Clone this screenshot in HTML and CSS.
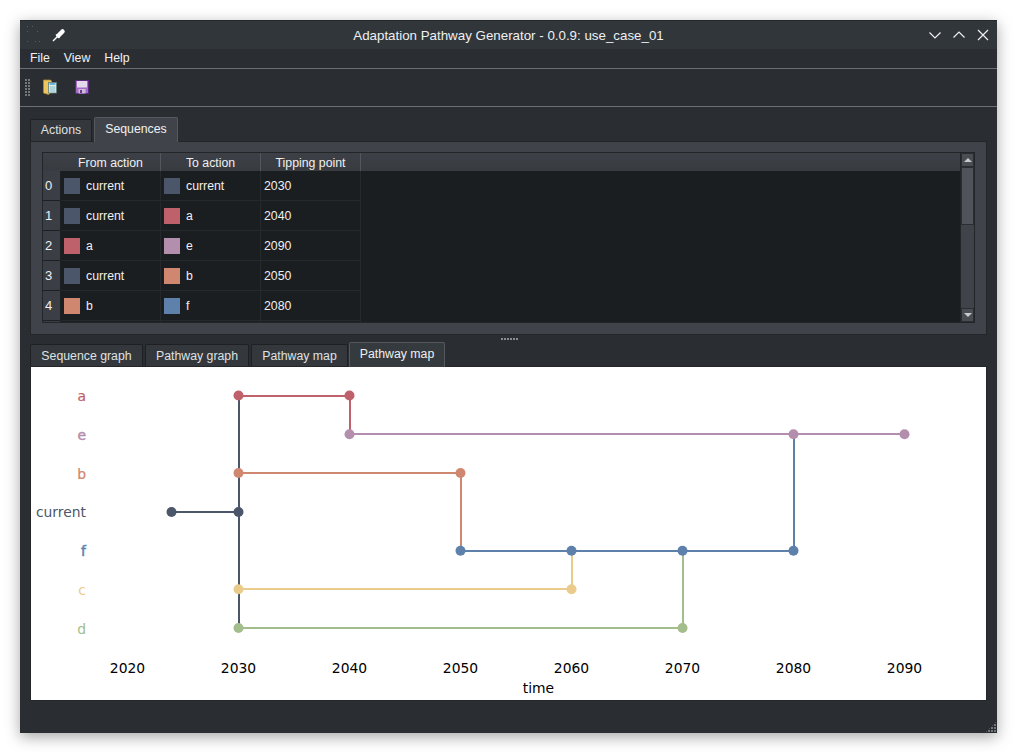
FILE: index.html
```html
<!DOCTYPE html>
<html lang="en">
<head>
    <meta charset="UTF-8">
    <title>Adaptation Pathway Generator</title>
    <link rel="stylesheet" href="styles.css">
</head>
<body>
    <div class="window">
        <div class="titlebar">
            <div class="title-left">
                <svg class="app-icon" width="20" height="20" viewBox="0 0 20 20">
                    <g fill="#5a5e62">
                        <rect x="1" y="1" width="1" height="1"/><rect x="6" y="1" width="1" height="1"/>
                        <rect x="1" y="6" width="1" height="1"/><rect x="11" y="6" width="1" height="1"/>
                        <rect x="1" y="16" width="1" height="1"/><rect x="9" y="16" width="1" height="1"/><rect x="13" y="16" width="1" height="1"/>
                    </g>
                </svg>
                <svg class="pin-icon" width="14" height="14" viewBox="0 0 14 14">
                    <path d="M1 13L6 8" fill="none" stroke="#fcfcfc" stroke-width="1.500"/>
                    <path d="M4 6.500L7.500 10" fill="none" stroke="#fcfcfc" stroke-width="1.500"/>
                    <path d="M6.500 7.500L10.500 3.500" fill="none" stroke="#fcfcfc" stroke-width="4.500" stroke-linecap="round"/>
                </svg>
            </div>
            <div class="title-text">Adaptation Pathway Generator - 0.0.9: use_case_01</div>
            <div class="title-buttons">
                <svg width="14" height="14" viewBox="0 0 14 14"><path d="M1.500 4.500L7 10l5.500-5.500" fill="none" stroke="#eff0f1" stroke-width="1.200"/></svg>
                <svg width="14" height="14" viewBox="0 0 14 14"><path d="M1.500 9.500L7 4l5.500 5.500" fill="none" stroke="#eff0f1" stroke-width="1.200"/></svg>
                <svg width="14" height="14" viewBox="0 0 14 14"><path d="M2 2l10 10M12 2L2 12" fill="none" stroke="#eff0f1" stroke-width="1.200"/></svg>
            </div>
        </div>

        <div class="menubar">
            <span class="menu-item">File</span>
            <span class="menu-item">View</span>
            <span class="menu-item">Help</span>
        </div>

        <div class="toolbar">
            <div class="grip"></div>
            <svg class="tool-icon" width="14" height="16" viewBox="0 0 14 16">
                <path d="M.5 1h7l1 1v11l-3 2.500-5-1.500z" fill="#eec65f" stroke="#b08a30" stroke-width=".8"/>
                <rect x="5.500" y="3.500" width="8" height="10.500" fill="#e4efec" stroke="#5d7f7c" stroke-width=".8"/>
                <path d="M6.500 5h6" stroke="#4fa8d8" stroke-width="1.600"/>
                <path d="M6.500 8h6M6.500 10h6M6.500 12h6" stroke="#7fb8c8" stroke-width="1"/>
            </svg>
            <svg class="tool-icon save-icon" width="14" height="16" viewBox="0 0 14 16">
                <rect x=".5" y="1.500" width="13" height="13" fill="#a46cc4" stroke="#5b2a80"/>
                <rect x="2" y="2" width="10" height="6.500" fill="#e4d8ec"/>
                <rect x="3.500" y="10" width="7" height="4.500" fill="#cdbbd8"/>
                <rect x="5" y="11" width="2" height="3" fill="#6b3a90"/>
            </svg>
        </div>

        <div class="content">
            <div class="tabs tabs-top">
                <div class="tab">Actions</div>
                <div class="tab tab-active">Sequences</div>
            </div>
            <div class="pane">
                <div class="table-frame">
                    <div class="table-main">
                        <div class="table-head">
                            <div class="corner"></div>
                            <div class="head-cell">From action</div>
                            <div class="head-cell">To action</div>
                            <div class="head-cell">Tipping point</div>
                        </div>
                        <div class="table-rows">
                            <div class="row">
                                <div class="row-num">0</div>
                                <div class="cell"><span class="swatch c-current"></span>current</div>
                                <div class="cell"><span class="swatch c-current"></span>current</div>
                                <div class="cell cell-num">2030</div>
                            </div>
                            <div class="row">
                                <div class="row-num">1</div>
                                <div class="cell"><span class="swatch c-current"></span>current</div>
                                <div class="cell"><span class="swatch c-a"></span>a</div>
                                <div class="cell cell-num">2040</div>
                            </div>
                            <div class="row">
                                <div class="row-num">2</div>
                                <div class="cell"><span class="swatch c-a"></span>a</div>
                                <div class="cell"><span class="swatch c-e"></span>e</div>
                                <div class="cell cell-num">2090</div>
                            </div>
                            <div class="row">
                                <div class="row-num">3</div>
                                <div class="cell"><span class="swatch c-current"></span>current</div>
                                <div class="cell"><span class="swatch c-b"></span>b</div>
                                <div class="cell cell-num">2050</div>
                            </div>
                            <div class="row">
                                <div class="row-num">4</div>
                                <div class="cell"><span class="swatch c-b"></span>b</div>
                                <div class="cell"><span class="swatch c-f"></span>f</div>
                                <div class="cell cell-num">2080</div>
                            </div>
                            <div class="row">
                                <div class="row-num"></div>
                                <div class="cell"></div>
                                <div class="cell"></div>
                                <div class="cell"></div>
                            </div>
                        </div>
                    </div>
                    <div class="scrollbar">
                        <div class="scroll-btn"><span class="arrow-up"></span></div>
                        <div class="scroll-thumb"></div>
                        <div class="scroll-track"></div>
                        <div class="scroll-btn"><span class="arrow-down"></span></div>
                    </div>
                </div>
            </div>

            <div class="splitter"><div class="splitter-dots"></div></div>

            <div class="tabs tabs-bottom">
                <div class="tab tab-seq">Sequence graph</div>
                <div class="tab tab-graph">Pathway graph</div>
                <div class="tab tab-map">Pathway map</div>
                <div class="tab tab-active tab-map-active">Pathway map</div>
            </div>
            <div class="plot-frame">
                <svg class="plot" width="955" height="333" viewBox="31 367 955 333">
                    <g fill="none" stroke-width="2">
                        <path d="M172 512H239M239 396V628" stroke="#4c566a"/>
                        <path d="M239 396H350V434" stroke="#bf616a"/>
                        <path d="M350 434H905" stroke="#b48ead"/>
                        <path d="M239 473H461V551" stroke="#d08770"/>
                        <path d="M239 589H572V551" stroke="#ebcb8b"/>
                        <path d="M239 628H683V551" stroke="#a3be8c"/>
                        <path d="M461 551H794V434" stroke="#5e81ac"/>
                    </g>
                    <g fill="#4c566a"><circle cx="171.500" cy="512" r="5"/><circle cx="238.500" cy="512" r="5"/></g>
                    <g fill="#bf616a"><circle cx="238.500" cy="395.500" r="5"/><circle cx="349.500" cy="395.500" r="5"/></g>
                    <g fill="#b48ead"><circle cx="349.500" cy="434.300" r="5"/><circle cx="793.500" cy="434.300" r="5"/><circle cx="904.500" cy="434.300" r="5"/></g>
                    <g fill="#d08770"><circle cx="238.500" cy="473" r="5"/><circle cx="460.500" cy="473" r="5"/></g>
                    <g fill="#ebcb8b"><circle cx="238.500" cy="589.200" r="5"/><circle cx="571.500" cy="589.200" r="5"/></g>
                    <g fill="#a3be8c"><circle cx="238.500" cy="628" r="5"/><circle cx="682.500" cy="628" r="5"/></g>
                    <g fill="#5e81ac"><circle cx="460.500" cy="550.700" r="5"/><circle cx="571.500" cy="550.700" r="5"/><circle cx="682.500" cy="550.700" r="5"/><circle cx="793.500" cy="550.700" r="5"/></g>

                    <g class="y-labels" text-anchor="end">
                        <text x="86" y="401" fill="#bf616a" stroke="#bf616a" stroke-width=".2">a</text>
                        <text x="86" y="440" fill="#b48ead" stroke="#b48ead" stroke-width=".5">e</text>
                        <text x="86" y="479" fill="#d08770" stroke="#d08770" stroke-width=".2">b</text>
                        <text x="86" y="517" fill="#4c566a">current</text>
                        <text x="86" y="556" fill="#5e81ac" stroke="#5e81ac" stroke-width=".5">f</text>
                        <text x="86" y="595" fill="#ebcb8b">c</text>
                        <text x="86" y="634" fill="#a3be8c">d</text>
                    </g>
                    <g class="x-labels" text-anchor="middle">
                        <text x="127.500" y="673">2020</text>
                        <text x="238.500" y="673">2030</text>
                        <text x="349.500" y="673">2040</text>
                        <text x="460.500" y="673">2050</text>
                        <text x="571.500" y="673">2060</text>
                        <text x="682.500" y="673">2070</text>
                        <text x="793.500" y="673">2080</text>
                        <text x="904.500" y="673">2090</text>
                        <text x="538.500" y="693">time</text>
                    </g>
                </svg>
            </div>
            <div class="statusbar"><div class="size-grip"></div></div>
        </div>
    </div>
</body>
</html>
```

FILE: styles.css
```css
* {
    box-sizing: border-box;
}
html, body {
    height: 100%;
}
body {
    margin: 0;
    padding: 20px;
    background-color: #fff;
    font-family: "Liberation Sans", Arial, sans-serif;
    font-size: 12.3px;
    color: #eff0f1;
    overflow: hidden;
}
.window {
    display: flex;
    flex-direction: column;
    width: 977px;
    height: 713px;
    background-color: #2a2e32;
    box-shadow: 0 4px 14px rgba(0, 0, 0, 0.35);
}

/* title bar */
.titlebar {
    display: flex;
    align-items: center;
    height: 29px;
    flex: none;
    background-color: #31363b;
    border-top: 1px solid #24282c;
}
.title-left {
    display: flex;
    align-items: center;
    width: 180px;
    padding-left: 6px;
}
.app-icon {
    margin-right: 6px;
}
.pin-icon {
    margin-top: -1px;
}
.title-text {
    flex: 1;
    text-align: center;
    font-size: 13.33px;
    color: #eff0f1;
}
.title-buttons {
    display: flex;
    justify-content: flex-end;
    gap: 10px;
    width: 180px;
    padding-right: 7px;
}

/* menu + toolbar */
.menubar {
    display: flex;
    align-items: center;
    flex: none;
    height: 20px;
    padding: 0 0 2px 10px;
    gap: 14px;
    background-color: #2a2e32;
    border-bottom: 1px solid #6b6f73;
}
.toolbar {
    display: flex;
    align-items: center;
    flex: none;
    height: 38px;
    padding: 0 0 1px 5px;
    border-bottom: 1px solid #6b6f73;
}
.grip {
    width: 5px;
    height: 17px;
    margin-right: 13px;
    background: conic-gradient(at 2px 2px, transparent 75%, #74777a 0) 0 0 / 3px 3px;
}
.tool-icon {
    margin-right: 18px;
}

/* tabs */
.content {
    flex: 1;
    display: flex;
    flex-direction: column;
    padding: 10px 10px 0 10px;
}
.tabs {
    display: flex;
    align-items: flex-end;
    flex: none;
    gap: 2px;
}
.tabs-top {
    height: 24px;
}
.tabs-top .tab:first-child {
    padding-bottom: 1px;
}
.tabs-bottom {
    height: 25px;
    margin-top: -1px;
}
.tab {
    display: flex;
    align-items: center;
    justify-content: center;
    height: 22px;
    background-color: #34383d;
    border: 1px solid #1e2124;
    border-bottom: none;
    border-radius: 2px 2px 0 0;
    color: #dfe1e2;
}
.tab:first-child {
    width: 62px;
}
.tab-active {
    height: 25px;
    width: 84px;
    background-color: #40444a;
    border-color: #55595e;
    color: #eff0f1;
    margin-bottom: -1px;
    position: relative;
    padding-bottom: 2px;
}
.tab-seq:first-child {
    width: 113px;
}
.tab-graph {
    width: 104px;
}
.tab-map {
    width: 97px;
}
.tab-map-active {
    width: 96px;
    margin-left: -1px;
    background-color: #353a3f;
}

/* upper pane */
.pane {
    flex: none;
    height: 194px;
    padding: 10px 11px 11px 11px;
    background-color: #40444a;
    border: 1px solid #55595e;
    outline: 1px solid #232629;
    outline-offset: -1px;
}
.table-frame {
    display: flex;
    height: 171px;
    background-color: #1b1e20;
    border: 1px solid #232629;
}
.table-main {
    flex: 1;
    min-width: 0;
    overflow: hidden;
}
.table-head {
    display: flex;
    height: 18px;
    background: linear-gradient(#3d4147, #383c41);
}
.corner {
    width: 18px;
}
.head-cell {
    width: 100px;
    padding-top: 3px;
    text-align: center;
    color: #eff0f1;
    border-right: 1px solid #54585d;
}
.table-rows {
    background-color: #1b1e20;
}
.row {
    display: flex;
    height: 30px;
}
.row-num {
    display: flex;
    align-items: center;
    width: 18px;
    padding-left: 2px;
    font-size: 13px;
    background-color: #3b3f45;
    background-clip: padding-box;
    border-bottom: 1px solid #1e2124;
    border-right: 1px solid #1e2124;
}
.cell {
    display: flex;
    align-items: center;
    width: 100px;
    padding-left: 3px;
    border-right: 1px solid #26292c;
    border-bottom: 1px solid #26292c;
}
.swatch {
    width: 16px;
    height: 16px;
    margin-right: 6px;
}
.c-current { background-color: #4c566a; }
.c-a { background-color: #bf616a; }
.c-e { background-color: #b48ead; }
.c-b { background-color: #d08770; }
.c-f { background-color: #5e81ac; }

/* scrollbar */
.scrollbar {
    display: flex;
    flex-direction: column;
    flex: none;
    width: 14px;
    background-color: #40444a;
    border-left: 1px solid #232629;
}
.scroll-btn {
    display: flex;
    align-items: center;
    justify-content: center;
    flex: none;
    height: 14px;
    background-color: #4a4e54;
    border: 1px solid #2a2d31;
}
.scroll-thumb {
    flex: none;
    height: 58px;
    background-color: #50545a;
    border: 1px solid #2a2d31;
}
.scroll-track {
    flex: 1;
}
.arrow-up, .arrow-down {
    width: 0;
    height: 0;
    border-left: 4px solid transparent;
    border-right: 4px solid transparent;
}
.arrow-up {
    border-bottom: 4px solid #c8cacb;
}
.arrow-down {
    border-top: 4px solid #c8cacb;
}

/* splitter + plot */
.splitter {
    display: flex;
    justify-content: center;
    flex: none;
    height: 7px;
    padding: 3px 0 0 1px;
}
.splitter-dots {
    width: 17px;
    height: 2px;
    background: linear-gradient(90deg, #8a8d90 2px, transparent 2px) 0 0 / 3px 2px;
}
.plot-frame {
    flex: none;
    width: 957px;
    height: 335px;
    border: 1px solid #232629;
    background-color: #fff;
}
.plot {
    display: block;
}
.plot text {
    font-family: "DejaVu Sans", sans-serif;
    font-size: 13.89px;
}
.x-labels text {
    fill: #000;
}
.statusbar {
    flex: 1;
    display: flex;
    justify-content: flex-end;
    align-items: flex-end;
    margin-right: -10px;
}
.size-grip {
    width: 12px;
    height: 12px;
    background: conic-gradient(at 2px 2px, transparent 75%, #74777a 0) 0 0 / 3px 3px;
    clip-path: polygon(100% 0, 100% 100%, 0 100%);
}
```
